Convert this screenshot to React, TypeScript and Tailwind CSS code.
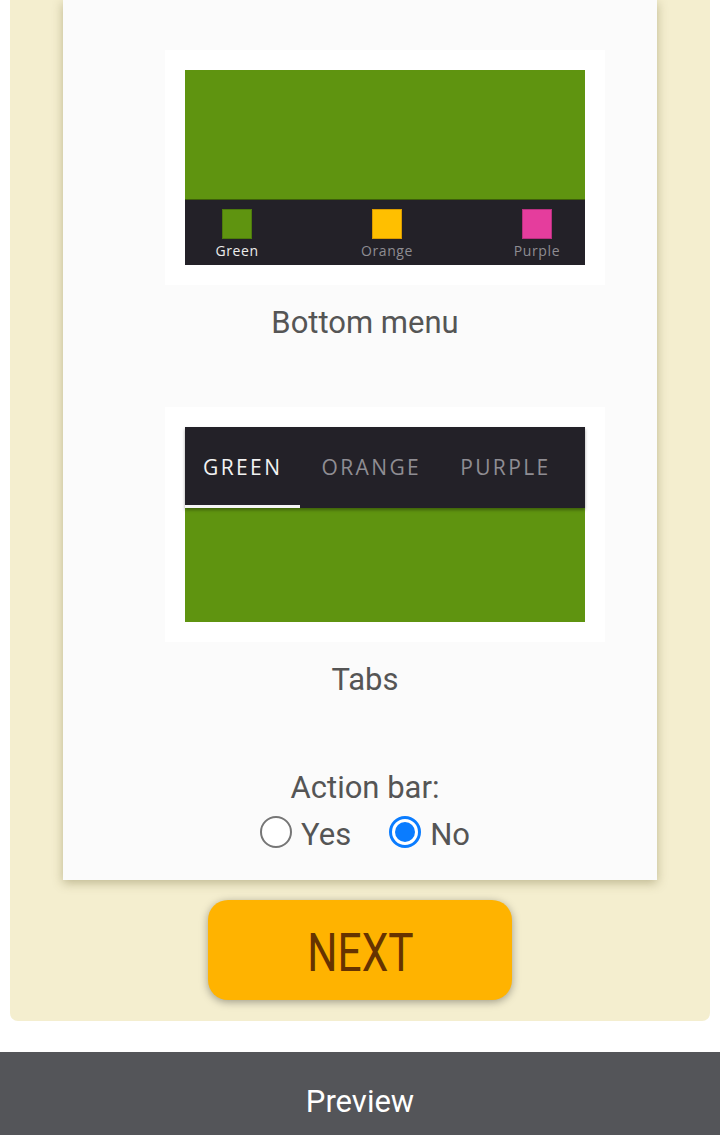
import React from "react";

const tabs = ["GREEN", "ORANGE", "PURPLE"];

const menuItems = [
  { label: "Green", color: "bg-[#5f9410]", border: "border-[#4c7a0c]", text: "text-[#ececec]" },
  { label: "Orange", color: "bg-[#ffbf00]", border: "border-[#d99a00]", text: "text-[#8e8c92]" },
  { label: "Purple", color: "bg-[#e53d9d]", border: "border-[#b8307f]", text: "text-[#8e8c92]" },
];

function BottomMenuPreview() {
  return (
    <div className="ml-[102px] w-[440px] bg-white p-[20px]">
      <div className="h-[195px] w-[400px] flex flex-col">
        <div className="h-[130px] bg-[#5f9410] border-b border-[#3d5f0a]" />
        <div className="flex-1 bg-[#232128] flex justify-between pl-[22px] pr-[18px] pt-[9px]">
          {menuItems.map((m) => (
            <div key={m.label} className="w-[60px] flex flex-col items-center">
              <div className={`h-[30px] w-[30px] border ${m.color} ${m.border}`} />
              <span className={`mt-[1px] text-[14px] leading-[22px] tracking-[0.6px] ${m.text}`} style={{ fontFamily: '"Open Sans", sans-serif' }}>
                {m.label}
              </span>
            </div>
          ))}
        </div>
      </div>
    </div>
  );
}

function TabsPreview() {
  return (
    <div className="ml-[102px] w-[440px] bg-white p-[20px]">
      <div className="h-[195px] w-[400px] flex flex-col">
        <div className="h-[81px] bg-[#232128] flex shadow-[0_2px_3px_rgba(0,0,0,0.35)] relative z-10">
          {tabs.map((t, i) => (
            <div
              key={t}
              className={`flex items-center justify-center text-[21px] tracking-[2.4px] ${i === 0 ? "pl-[18px] pr-[18px] text-[#f2f2f2] border-b-[3px] border-[#f5f5f5] pt-[3px]" : "pl-[21px] pr-[18px] text-[#8f8d93]"}`}
              style={{ fontFamily: '"Open Sans", sans-serif' }}
            >
              {t}
            </div>
          ))}
        </div>
        <div className="flex-1 bg-[#5f9410]" />
      </div>
    </div>
  );
}

function Radio({ checked, label }: { checked: boolean; label: string }) {
  return (
    <label className="flex items-center gap-[9px] h-[32px]">
      {checked ? (
        <span className="h-[32px] w-[32px] rounded-full border-[3px] border-[#0a7cff] bg-white flex items-center justify-center">
          <span className="h-[20px] w-[20px] rounded-full bg-[#0a7cff]" />
        </span>
      ) : (
        <span className="h-[32px] w-[32px] rounded-full border-2 border-[#767676] bg-white" />
      )}
      <span className="text-[31px] leading-[32px] text-[#555555] mt-[6px]">{label}</span>
    </label>
  );
}

export default function App() {
  return (
    <div className="min-h-screen bg-white" style={{ fontFamily: "Roboto, sans-serif" }}>
      <div className="mx-[10px] bg-[#f4eecf] rounded-b-[8px] pb-[21px]">
        <div className="mx-[53px] bg-[#fbfbfb] shadow-[0_3px_10px_rgba(90,80,30,0.35)] pt-[50px] pb-[32px]">
          <BottomMenuPreview />
          <p className="pl-[10px] mt-[22px] h-[32px] text-center text-[31px] leading-[32px] text-[#555555]">Bottom menu</p>

          <div className="mt-[68px]">
            <TabsPreview />
          </div>
          <p className="pl-[10px] mt-[22px] h-[32px] text-center text-[31px] leading-[32px] text-[#555555]">Tabs</p>

          <p className="pl-[10px] mt-[76px] h-[32px] text-center text-[31px] leading-[32px] text-[#555555]">Action bar:</p>
          <div className="pl-[10px] mt-[12px] flex justify-center gap-[38px]">
            <Radio checked={false} label="Yes" />
            <Radio checked={true} label="No" />
          </div>
        </div>

        <div className="mt-[20px] flex justify-center">
          <button className="h-[100px] w-[304px] rounded-[20px] bg-[#ffb300] shadow-[0_2px_8px_rgba(0,0,0,0.35)] flex items-center justify-center">
            <span className="mt-[6px] text-[53px] leading-none text-[#663300] scale-x-[0.8] inline-block">NEXT</span>
          </button>
        </div>
      </div>

      <div className="mt-[31px] h-[100px] bg-[#545559] flex items-center justify-center">
        <span className="text-[31px] text-white inline-block">Preview</span>
      </div>
    </div>
  );
}
